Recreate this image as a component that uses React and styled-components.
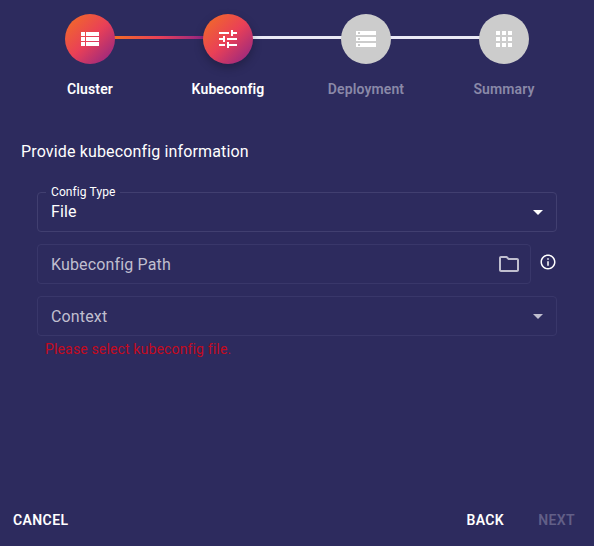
import React from "react";
import styled, { createGlobalStyle, css } from "styled-components";

const GlobalStyle = createGlobalStyle`
  *, *::before, *::after { box-sizing: border-box; }
  body {
    margin: 0;
    background: #2d2b5e;
    color: #fff;
    font-family: Roboto, "Liberation Sans", sans-serif;
  }
`;

const Page = styled.main`
  display: flex;
  flex-direction: column;
  height: 100vh;
  min-height: 546px;
  overflow: hidden;
`;

const Stepper = styled.ol`
  display: flex;
  margin: 0;
  padding: 14px 21px 0;
  list-style: none;
`;

const Step = styled.li`
  position: relative;
  flex: 1;
  display: flex;
  flex-direction: column;
  align-items: center;
`;

const Connector = styled.span`
  position: absolute;
  top: 22px;
  left: calc(-50% + 20px);
  right: calc(50% + 20px);
  height: 3px;
  background: ${({ $done }) =>
    $done
      ? "linear-gradient(95deg, rgb(242,113,33) 0%, rgb(233,64,87) 50%, rgb(138,35,135) 100%)"
      : "#eaeaf6"};
`;

const StepCircle = styled.span`
  z-index: 1;
  display: flex;
  align-items: center;
  justify-content: center;
  width: 50px;
  height: 50px;
  border-radius: 50%;
  background: #ccc;
  ${({ $state }) =>
    $state !== "todo" &&
    css`
      background: linear-gradient(136deg, rgb(242,113,33) 0%, rgb(233,64,87) 50%, rgb(138,35,135) 100%);
    `}
  ${({ $state }) =>
    $state === "active" &&
    css`
      box-shadow: 0 4px 10px 0 rgba(0, 0, 0, 0.25);
    `}
`;

const StepLabel = styled.span`
  margin-top: 15px;
  font-size: 14px;
  line-height: 20px;
  font-weight: 600;
  letter-spacing: 0.12px;
  color: ${({ $muted }) => ($muted ? "#8a89a8" : "#fff")};
`;

const Svg = styled.svg`
  display: block;
  flex: none;
  width: ${({ $size }) => $size}px;
  height: ${({ $size }) => $size}px;
  fill: currentColor;
`;

const Title = styled.h1`
  margin: 41px 21px 0;
  font-size: 16px;
  line-height: 24px;
  font-weight: 400;
  letter-spacing: 0.15px;
`;

const Form = styled.form`
  display: flex;
  flex-direction: column;
  gap: 12px;
  padding: 28px 37px 0;
`;

const FieldRow = styled.div`
  display: flex;
  align-items: center;
  gap: 8px;
`;

const Field = styled.div`
  position: relative;
  flex: 1;
  display: flex;
  align-items: center;
  justify-content: space-between;
  height: 40px;
  padding: 0 ${({ $wideEnd }) => ($wideEnd ? 10 : 7)}px 0 14px;
  font-size: 16px;
  line-height: 24px;
  letter-spacing: 0.15px;
  color: ${({ $dim }) => ($dim ? "#c0bfcf" : "#fff")};
`;

const Placeholder = styled.span`
  padding-top: 2px;
`;

const Outline = styled.fieldset`
  position: absolute;
  inset: ${({ $notched }) => ($notched ? "-6px" : "0")} 0 0;
  margin: 0;
  padding: 0 8px;
  border: 1px solid ${({ $notched }) => ($notched ? "#413f70" : "#39376a")};
  border-radius: 4px;
  pointer-events: none;
`;

const FloatingLabel = styled.legend`
  height: 12px;
  padding: 0 5px;
  font-size: 12px;
  line-height: 12px;
  letter-spacing: 0.1px;
  color: #fff;
`;

const InfoSlot = styled.span`
  display: flex;
  margin-bottom: 4px;
`;

const ErrorText = styled.p`
  margin: 3px 45px 0;
  font-size: 14px;
  line-height: 20px;
  letter-spacing: 0.15px;
  color: #c40a20;
`;

const Actions = styled.footer`
  display: flex;
  align-items: center;
  gap: 34px;
  margin-top: auto;
  padding: 0 19px 14px 13px;
`;

const Action = styled.button`
  border: 0;
  padding: 0;
  background: none;
  font: 600 14px/24px Roboto, "Liberation Sans", sans-serif;
  letter-spacing: 0.4px;
  text-transform: uppercase;
  color: ${({ disabled }) => (disabled ? "#625f87" : "#fff")};
  margin-right: ${({ $pushRest }) => ($pushRest ? "auto" : "0")};
`;

const paths = {
  list: "M3 14h4v-4H3v4zm0 5h4v-4H3v4zM3 9h4V5H3v4zm5 5h13v-4H8v4zm0 5h13v-4H8v4zM8 5v4h13V5H8z",
  tune: "M3 17v2h6v-2H3zM3 5v2h10V5H3zm10 16v-2h8v-2h-8v-2h-2v6h2zM7 9v2H3v2h4v2h2V9H7zm14 4v-2H11v2h10zm-6-4h2V7h4V5h-4V3h-2v6z",
  storage: "M2 20h20v-4H2v4zm2-3h2v2H4v-2zM2 4v4h20V4H2zm4 3H4V5h2v2zm-4 7h20v-4H2v4zm2-3h2v2H4v-2z",
  apps: "M4 8h4V4H4v4zm6 12h4v-4h-4v4zm-6 0h4v-4H4v4zm0-6h4v-4H4v4zm6 0h4v-4h-4v4zm6-10v4h4V4h-4zm-6 4h4V4h-4v4zm6 6h4v-4h-4v4zm0 6h4v-4h-4v4z",
  arrow: "M7 10l5 5 5-5z",
  folder: "M9.17 6l2 2H20v10H4V6h5.17M10 4H4c-1.1 0-1.99.9-1.99 2L2 18c0 1.1.9 2 2 2h16c1.1 0 2-.9 2-2V8c0-1.1-.9-2-2-2h-8l-2-2z",
  info: "M11 7h2v2h-2zm0 4h2v6h-2zm1-9C6.48 2 2 6.48 2 12s4.48 10 10 10 10-4.48 10-10S17.52 2 12 2zm0 18c-4.41 0-8-3.59-8-8s3.59-8 8-8 8 3.59 8 8-3.59 8-8 8z",
};

const Icon = ({ name, size = 24 }) => (
  <Svg viewBox="0 0 24 24" $size={size} aria-hidden="true">
    <path d={paths[name]} />
  </Svg>
);

const steps = [
  { label: "Cluster", icon: "list", state: "done" },
  { label: "Kubeconfig", icon: "tune", state: "active" },
  { label: "Deployment", icon: "storage", state: "todo" },
  { label: "Summary", icon: "apps", state: "todo" },
];

export default function App() {
  return (
    <Page>
      <GlobalStyle />
      <Stepper>
        {steps.map((step, i) => (
          <Step key={step.label}>
            {i > 0 && <Connector $done={step.state !== "todo"} />}
            <StepCircle $state={step.state}>
              <Icon name={step.icon} />
            </StepCircle>
            <StepLabel $muted={step.state === "todo"}>{step.label}</StepLabel>
          </Step>
        ))}
      </Stepper>
      <Title>Provide kubeconfig information</Title>
      <Form>
        <FieldRow>
          <Field>
            <Outline $notched>
              <FloatingLabel>Config Type</FloatingLabel>
            </Outline>
            <span>File</span>
            <Icon name="arrow" />
          </Field>
        </FieldRow>
        <FieldRow>
          <Field $dim $wideEnd>
            <Outline />
            <Placeholder>Kubeconfig Path</Placeholder>
            <Icon name="folder" />
          </Field>
          <InfoSlot>
            <Icon name="info" size={18} />
          </InfoSlot>
        </FieldRow>
        <FieldRow>
          <Field $dim>
            <Outline />
            <Placeholder>Context</Placeholder>
            <Icon name="arrow" />
          </Field>
        </FieldRow>
      </Form>
      <ErrorText>Please select kubeconfig file.</ErrorText>
      <Actions>
        <Action type="button" $pushRest>Cancel</Action>
        <Action type="button">Back</Action>
        <Action type="button" disabled>Next</Action>
      </Actions>
    </Page>
  );
}
